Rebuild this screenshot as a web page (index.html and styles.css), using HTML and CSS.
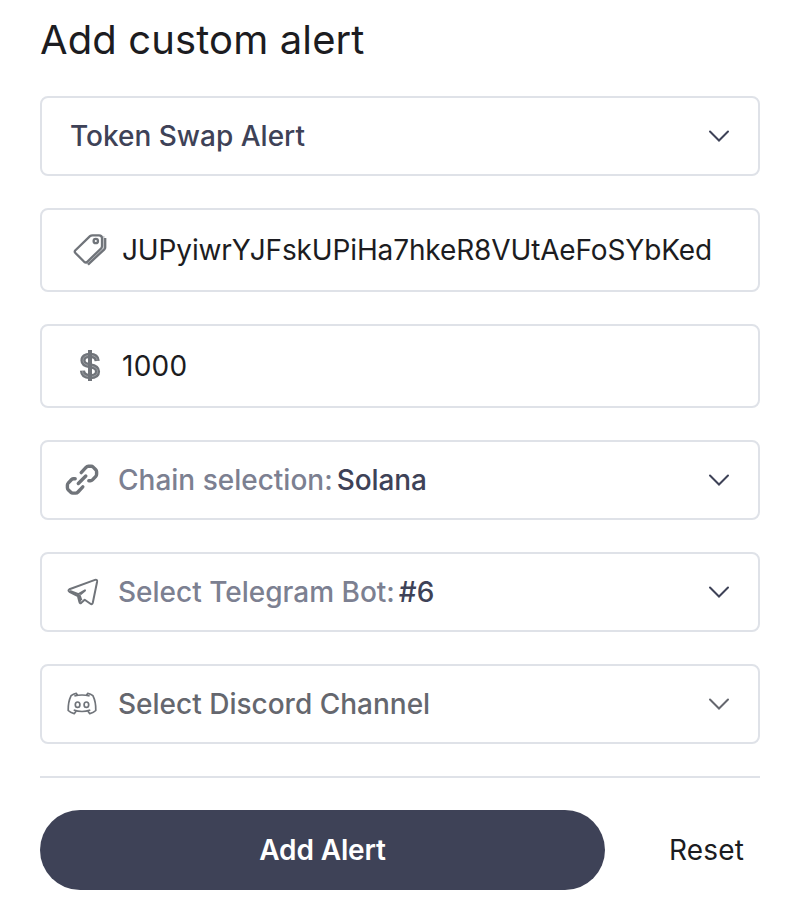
FILE: index.html
```html
<!DOCTYPE html>
<html lang="en"><head><meta charset="utf-8"><title>Add custom alert</title><link rel="stylesheet" href="styles.css"></head>
<body><main class="form">
<h1 class="title">Add custom alert</h1>
<div class="field select"><span class="label first">Token Swap Alert</span><svg class="chevron" viewBox="0 0 24 24"><path d="m3 7.5 9 9 9-9"/></svg></div>
<div class="field input"><svg class="icon tag" viewBox="0 0 36 36"><path class="shade" d="M31.5 4v12.5L14.5 32"/><path d="M3.2 18.5 18 4.2q1-.9 2.5-.9H27q3 0 3 3V14q0 1.5-1 2.5L15 30q-1.3 1-2.6 0l-9-9q-1.2-1.2-.2-2.5Z"/><path d="M33.2 6v9.5q0 1-.8 1.8L16 32.6"/><circle cx="23.8" cy="9" r="2.2"/></svg><span class="value">JUPyiwrYJFskUPiHa7hkeR8VUtAeFoSYbKed</span></div>
<div class="field input"><svg class="icon dollar" viewBox="0 0 36 36"><path class="bar" d="M18 2v31"/><path class="outer" d="M25.2 13q-.4-5.6-7.2-5.6-7 0-7 5 0 4.2 7 5.4 7.5 1.2 7.5 5.6 0 5.2-7.5 5.2-7.2 0-7.5-5.9"/><path class="inner" d="M25.2 12.5q-.4-5.1-7.2-5.1-7 0-7 5 0 4.2 7 5.4 7.5 1.2 7.5 5.6 0 5.2-7.5 5.2-7.2 0-7.5-5.4"/><path class="bar" d="M18 2v31"/></svg><span class="value amount">1000</span></div>
<div class="field select"><svg class="icon chain" viewBox="0 0 36 36"><path d="M17.2 10.6 22 5.4q1-1.1 2.4-1.1h2.8q1.2 0 2 .8l2.6 2.6q.8.8.8 2v2.6q0 1.2-.8 2l-3.4 3.6q-.8.8-2 .8h-1.6M18.8 24.8 14 30q-1 1.1-2.4 1.1H8.8q-1.2 0-2-.8l-2.6-2.6q-.8-.8-.8-2v-2.6q0-1.2.8-2l3.4-3.6q.8-.8 2-.8h1.6M14.3 21.5l7.5-7.5"/></svg><span class="label muted">Chain selection:</span><span class="label choice">Solana</span><svg class="chevron" viewBox="0 0 24 24"><path d="m3 7.5 9 9 9-9"/></svg></div>
<div class="field select"><svg class="icon plane" viewBox="0 0 36 36"><path d="M5.4 15.2 31 5.9q2.4-.6 2.1 1.8l-4.3 21q-.6 2.2-2.4 1l-5.7-4-3.4 3.1q-1.6 1-1.9-.9L13.9 22l-8.5-4.2q-1.8-1.3 0-2.6Z"/><path d="m6 17 8.5 3.2 6.5-3.8-4.8 4.2"/><path class="fold" d="m13.5 20.4 3 .4 1.6 4.5-2 3.3Z"/></svg><span class="label muted">Select Telegram Bot:</span><span class="label choice">#6</span><svg class="chevron" viewBox="0 0 24 24"><path d="m3 7.5 9 9 9-9"/></svg></div>
<div class="field select"><svg class="icon discord" viewBox="0 0 36 36"><path d="m13.2 9-1-1.7Q9.3 7.8 7.1 9.6 4 15.8 4.2 24.5q2.5 2.4 6 3.2l2-2.8M22.8 9l1-1.7q2.9.5 5.1 2.3 3.1 6.2 2.9 14.9-2.5 2.4-6 3.2l-2-2.8M10.4 9.8q7.6-1.6 15.2 0M9.7 24q8.3 3 16.6 0"/><ellipse cx="13.6" cy="18.7" rx="2.3" ry="2.7"/><ellipse cx="22.4" cy="18.7" rx="2.3" ry="2.7"/></svg><span class="label gray">Select Discord Channel</span><svg class="chevron dim" viewBox="0 0 24 24"><path d="m3 7.5 9 9 9-9"/></svg></div>
<div class="actions"><button class="submit">Add Alert</button><button class="reset">Reset</button></div>
</main></body></html>
```
FILE: styles.css
```css
*{box-sizing:border-box}
body{margin:0;background:#fff;font-family:Inter,sans-serif;color:#1c1c21}
.form{width:720px;margin-left:40px}
.title{margin:0;padding-top:16px;height:96px;font-size:40px;line-height:48px;font-weight:400;letter-spacing:.12px}
.field{display:flex;align-items:center;height:80px;margin-bottom:32px;border:2px solid #dfe2e8;border-radius:8px;font-size:28px;padding:0 27px 0 22px;white-space:nowrap}
.input{height:84px;padding-left:30px}
.icon{width:36px;height:36px;flex:none;fill:none;stroke:#70747a;stroke-width:2;stroke-linejoin:round}
.tag{stroke-width:2.3}
.tag .shade{stroke:#c9cbce;stroke-width:2}
.dollar .bar{stroke-width:4}
.dollar .outer{stroke-width:5.2}
.dollar .inner{stroke:#a4a7ab;stroke-width:.8}
.chain{stroke-width:3.4;stroke-linecap:round}
.plane .fold{fill:#70747a;stroke:none}
.discord{stroke-width:1.7}
.value{margin-left:14px;letter-spacing:-.13px}
.amount{letter-spacing:.25px}
.label{margin-left:18px;font-weight:500}
.first{margin-left:6px;color:#3e4257}
.muted{color:#7c8091}
.choice{margin-left:4px;color:#3e4257;letter-spacing:-.1px}
.gray{color:#65676e}
.chevron{width:24px;height:24px;margin-left:auto;fill:none;stroke:#3e4257;stroke-width:2;stroke-linecap:round}
.dim{stroke:#65676e}
.actions{display:flex;border-top:2px solid #dfe2e8;padding-top:32px}
button{border:0;padding:0;font:500 28px Inter,sans-serif;height:80px}
.submit{width:565px;border-radius:40px;background:#3e4257;color:#fff;font-weight:600;letter-spacing:-.15px}
.reset{margin-left:64px;background:none;color:#1c1c21;font-weight:400;letter-spacing:.15px}
```
